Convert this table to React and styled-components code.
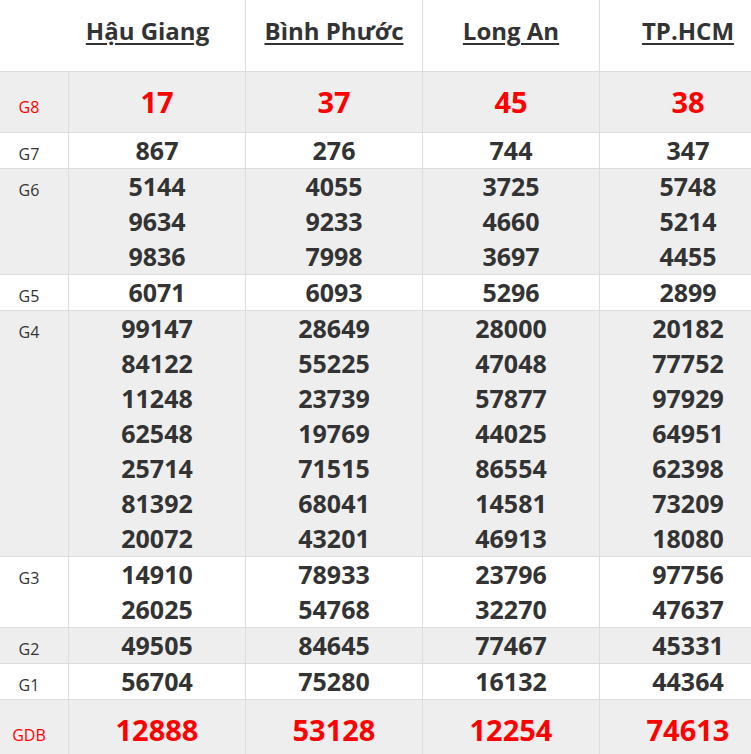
import styled, { createGlobalStyle } from "styled-components";

const GlobalStyle = createGlobalStyle`
  html, body {
    margin: 0;
    padding: 0;
    overflow: hidden;
    background: #fff;
  }
  body {
    font-family: "Open Sans", "Noto Sans", sans-serif;
    color: #333;
  }
`;

const provinces = ["Hậu Giang", "Bình Phước", "Long An", "TP.HCM"];

// each prize: label + 4 columns of numbers
const prizes = [
  { label: "G8", big: true, cols: [["17"], ["37"], ["45"], ["38"]] },
  { label: "G7", cols: [["867"], ["276"], ["744"], ["347"]] },
  {
    label: "G6",
    cols: [
      ["5144", "9634", "9836"],
      ["4055", "9233", "7998"],
      ["3725", "4660", "3697"],
      ["5748", "5214", "4455"],
    ],
  },
  { label: "G5", cols: [["6071"], ["6093"], ["5296"], ["2899"]] },
  {
    label: "G4",
    cols: [
      ["99147", "84122", "11248", "62548", "25714", "81392", "20072"],
      ["28649", "55225", "23739", "19769", "71515", "68041", "43201"],
      ["28000", "47048", "57877", "44025", "86554", "14581", "46913"],
      ["20182", "77752", "97929", "64951", "62398", "73209", "18080"],
    ],
  },
  {
    label: "G3",
    cols: [
      ["14910", "26025"],
      ["78933", "54768"],
      ["23796", "32270"],
      ["97756", "47637"],
    ],
  },
  { label: "G2", cols: [["49505"], ["84645"], ["77467"], ["45331"]] },
  { label: "G1", cols: [["56704"], ["75280"], ["16132"], ["44364"]] },
  { label: "GDB", big: true, cols: [["12888"], ["53128"], ["12254"], ["74613"]] },
];

const App = () => {
  return (
    <>
      <GlobalStyle />
      <Table>
        <HeaderRow>
          <HeaderCorner />
          {provinces.map((name, idx) => (
            <HeaderCell key={name} $first={idx === 0}>
              <ProvinceLink>{name}</ProvinceLink>
            </HeaderCell>
          ))}
        </HeaderRow>

        {prizes.map((prize, i) => (
          <PrizeRow key={prize.label} $gray={i % 2 === 0}>
            <PrizeLabel $red={prize.big}>{prize.label}</PrizeLabel>
            {prize.cols.map((nums, c) => (
              <NumberCell key={c}>
                {nums.map((n, k) => (
                  <NumberText key={k} $big={prize.big}>{n}</NumberText>
                ))}
              </NumberCell>
            ))}
          </PrizeRow>
        ))}
      </Table>
    </>
  );
};

const Table = styled.div`
  display: flex;
  flex-direction: column;
  width: 776px;
`;

// header
const HeaderRow = styled.div`
  display: grid;
  grid-template-columns: 50px 195px 177px 177px 177px;
  height: 71px;
  background: #fff;
`;
const HeaderCorner = styled.div``;
const HeaderCell = styled.div`
  text-align: center;
  border-left: ${(p) => (p.$first ? "none" : "1px solid #ddd")};
  line-height: 61px;
  padding-bottom: 10px;
`;
const ProvinceLink = styled.span`
  font-size: 24px;
  font-weight: 700;
  color: #333;
  text-decoration: underline;
  text-decoration-thickness: 2px;
  text-underline-offset: 3px;
`;

// rows
const PrizeRow = styled.div`
  display: grid;
  grid-template-columns: 68px 177px 177px 177px 177px;
  align-items: baseline;
  border-top: 1px solid #ddd;
  background: ${(p) => (p.$gray ? "#eeeeee" : "#fff")};
`;
const PrizeLabel = styled.div`
  font-size: 16px;
  color: ${(p) => (p.$red ? "#ff0000" : "#333")};
  text-align: center;
  padding-right: 10px;
`;
const NumberCell = styled.div`
  display: flex;
  flex-direction: column;
  align-items: center;
  border-left: 1px solid #ddd;
`;
const NumberText = styled.div`
  font-size: ${(p) => (p.$big ? "29px" : "25px")};
  line-height: ${(p) => (p.$big ? "60px" : "35px")};
  font-weight: 700;
  color: ${(p) => (p.$big ? "#ff0000" : "#333")};
`;

export default App;
